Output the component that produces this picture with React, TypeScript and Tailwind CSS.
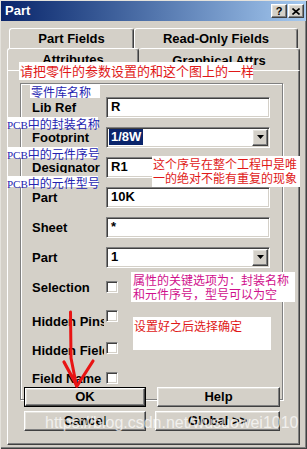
const raised =
  "border border-t-white border-l-white border-b-[#404040] border-r-[#404040] shadow-[inset_-1px_-1px_0_#808080,inset_1px_1px_0_#e4e2dc]";
const sunken =
  "border border-t-[#808080] border-l-[#808080] border-b-white border-r-white shadow-[inset_1px_1px_0_#404040,inset_-1px_-1px_0_#d4d0c8]";
const cjk = "font-['Noto_Sans_CJK_SC',sans-serif]";

function Label({ text }: { text: string }) {
  return (
    <div className="w-[72px] h-[11px] leading-[12px] overflow-hidden whitespace-nowrap text-[13px] font-bold text-black">
      {text}
    </div>
  );
}

function TextRow({ label, value }: { label: string; value: string }) {
  return (
    <div className="flex h-[30px] items-center">
      <Label text={label} />
      <div className={`ml-[2px] flex h-[21px] w-[164px] items-center bg-white px-[4px] text-[13px] font-bold ${sunken}`}>
        {value}
      </div>
    </div>
  );
}

function ComboRow({ label, value, selected }: { label: string; value: string; selected?: boolean }) {
  return (
    <div className="flex h-[30px] items-center">
      <Label text={label} />
      <div className={`ml-[2px] flex h-[21px] w-[164px] items-center justify-between bg-white pl-[2px] pr-[1px] text-[13px] font-bold ${sunken}`}>
        <span className={selected ? "bg-[#0a246a] px-[2px] leading-[16px] text-white" : "px-[2px]"}>{value}</span>
        <div className={`flex h-[17px] w-[16px] items-center justify-center bg-[#d4d0c8] ${raised}`}>
          <svg width="7" height="4" viewBox="0 0 7 4">
            <path d="M0 0h7L3.5 4z" fill="#000" />
          </svg>
        </div>
      </div>
    </div>
  );
}

function CheckRow({ label, h, lift }: { label: string; h: string; lift: string }) {
  return (
    <div className={`flex items-center ${h}`}>
      <Label text={label} />
      <div className={`ml-[2px] h-[12px] w-[12px] bg-white ${sunken} ${lift}`} />
    </div>
  );
}

function Btn({ text, isDefault }: { text: string; isDefault?: boolean }) {
  const inner = (
    <div className={`flex h-full w-full items-center justify-center bg-[#d4d0c8] text-[13px] font-bold ${raised}`}>
      {text}
    </div>
  );
  return isDefault ? <div className="h-[20px] border border-black">{inner}</div> : <div className="h-[20px]">{inner}</div>;
}

function Note({ className, children }: { className: string; children: React.ReactNode }) {
  return (
    <div className={`absolute whitespace-nowrap bg-white text-[12px] leading-[14px] ${cjk} ${className}`}>{children}</div>
  );
}

export default function App() {
  return (
    <div className="relative h-[449px] w-[307px] overflow-hidden bg-[#d4d0c8] font-['Liberation_Sans',Arial,sans-serif] text-black shadow-[inset_1px_1px_0_#e4e2dc,inset_-1px_-1px_0_#404040,inset_-2px_-2px_0_#808080]">
      {/* title bar */}
      <div className="mx-[1px] mt-[1px] flex h-[20px] items-center justify-between bg-gradient-to-r from-[#0a246a] to-[#a6caf0] pl-[4px] pr-[2px]">
        <span className="text-[13px] font-bold text-white">Part</span>
        <div className="flex gap-[1px]">
          <div className={`flex h-[14px] w-[16px] items-center justify-center bg-[#d4d0c8] text-[11px] font-bold leading-none ${raised}`}>?</div>
          <div className={`flex h-[14px] w-[16px] items-center justify-center bg-[#d4d0c8] ${raised}`}>
            <svg width="8" height="7" viewBox="0 0 8 7">
              <path d="M0.5 0.5l7 6M7.5 0.5l-7 6" stroke="#000" strokeWidth="1.6" />
            </svg>
          </div>
        </div>
      </div>

      <div className="pl-[7px] pt-[7px]">
        {/* back tab row */}
        <div className="ml-[2px] flex h-[20px]">
          <div className="flex w-[125px] items-center justify-center rounded-t-[3px] border-l border-t border-r border-l-white border-t-white border-r-[#404040] text-[13px] font-bold shadow-[inset_-1px_0_0_#808080]">
            Part Fields
          </div>
          <div className="flex w-[164px] items-center justify-center rounded-t-[3px] border-l border-t border-r border-l-white border-t-white border-r-[#404040] text-[13px] font-bold shadow-[inset_-1px_0_0_#808080]">
            Read-Only Fields
          </div>
        </div>
        {/* front tab row */}
        <div className="flex h-[22px]">
          <div className="flex w-[132px] justify-center rounded-t-[3px] border-l border-t border-r border-l-white border-t-white border-r-[#404040] pt-[1px] text-[13px] font-bold shadow-[inset_-1px_0_0_#808080]">
            Attributes
          </div>
          <div className="flex w-[161px] justify-center rounded-t-[3px] border-t border-r border-t-white border-r-[#404040] pt-[2px] text-[13px] font-bold shadow-[inset_-1px_0_0_#808080]">
            Graphical Attrs
          </div>
        </div>

        {/* panel */}
        <div className="h-[375px] w-[293px] border border-t-white border-l-white border-b-[#404040] border-r-[#404040] shadow-[inset_-1px_-1px_0_#808080]">
          <div className="ml-[12px] mt-[12px] h-[317px] w-[263px] border border-[#808080] pl-[11px] pt-[8px] shadow-[1px_1px_0_white,inset_1px_1px_0_white]">
            <TextRow label="Lib Ref" value="R" />
            <ComboRow label="Footprint" value="1/8W" selected />
            <TextRow label="Designator" value="R1" />
            <TextRow label="Part" value="10K" />
            <TextRow label="Sheet" value="*" />
            <ComboRow label="Part" value="1" />
            <CheckRow label="Selection" h="h-[30px]" lift="" />
            <CheckRow label="Hidden Pins" h="h-[34px] pt-[4px]" lift="-translate-y-[5px]" />
            <CheckRow label="Hidden Fields" h="h-[28px]" lift="-translate-y-[2px]" />
            <CheckRow label="Field Name" h="h-[28px]" lift="" />
          </div>

          <div className="relative -mt-[13px] ml-[16px] grid grid-cols-[122px_123px] gap-x-[11px] gap-y-[4px]">
            <Btn text="OK" isDefault />
            <Btn text="Help" />
            <Btn text="Cancel" />
            <div className="-ml-[2px]">
              <Btn text="Global >>" />
            </div>
          </div>
        </div>
      </div>

      {/* annotations */}
      <Note className="left-[19px] top-[62px] h-[18px] w-[234px] pl-[1px] pt-[1px] text-[13px] leading-[16px] text-[#e01818]">
        请把零件的参数设置的和这个图上的一样
      </Note>
      <Note className="left-[30px] top-[85px] h-[13px] w-[70px] pl-[1px] leading-[13px] text-[#2424b0]">零件库名称</Note>
      <Note className="left-[7px] top-[117px] h-[11px] w-[91px] text-[11.5px] leading-[11px] text-[#2424b0]">
        <span className="font-['Liberation_Serif',serif] text-[11px]">PCB</span>中的封装名称
      </Note>
      <Note className="left-[7px] top-[147px] h-[11px] w-[91px] text-[11.5px] leading-[11px] text-[#2424b0]">
        <span className="font-['Liberation_Serif',serif] text-[11px]">PCB</span>中的元件序号
      </Note>
      <Note className="left-[7px] top-[176px] h-[11px] w-[91px] text-[11.5px] leading-[11px] text-[#2424b0]">
        <span className="font-['Liberation_Serif',serif] text-[11px]">PCB</span>中的元件型号
      </Note>
      <Note className="left-[152px] top-[156px] h-[31px] w-[148px] pl-[1px] pt-[1px] text-[#e01818]">
        这个序号在整个工程中是唯
        <br />
        一的绝对不能有重复的现象
      </Note>
      <Note className="left-[131px] top-[272px] h-[30px] w-[164px] pl-[2px] pt-[1px] leading-[13.5px] text-[#d0108c]">
        属性的关键选项为：封装名称
        <br />
        和元件序号，型号可以为空
      </Note>
      <Note className="left-[133px] top-[317px] h-[33px] w-[138px] pl-[1px] pt-[2px] text-[#e01818]">设置好之后选择确定</Note>

      {/* red arrow */}
      <svg className="pointer-events-none absolute left-[58px] top-[308px]" width="42" height="84" viewBox="58 308 42 84">
        <path d="M70.5 312 L71 358 L76.5 386" fill="none" stroke="#e81414" strokeWidth="3" strokeLinecap="round" />
        <path d="M64 362 L77 386 L93 361" fill="none" stroke="#e81414" strokeWidth="3.2" strokeLinecap="round" strokeLinejoin="round" />
      </svg>

      {/* watermark */}
      <div className="pointer-events-none absolute left-[45px] top-[411px] whitespace-nowrap text-[16px] text-white/70">
        https://blog.csdn.net/wusuowei1010
      </div>
    </div>
  );
}
